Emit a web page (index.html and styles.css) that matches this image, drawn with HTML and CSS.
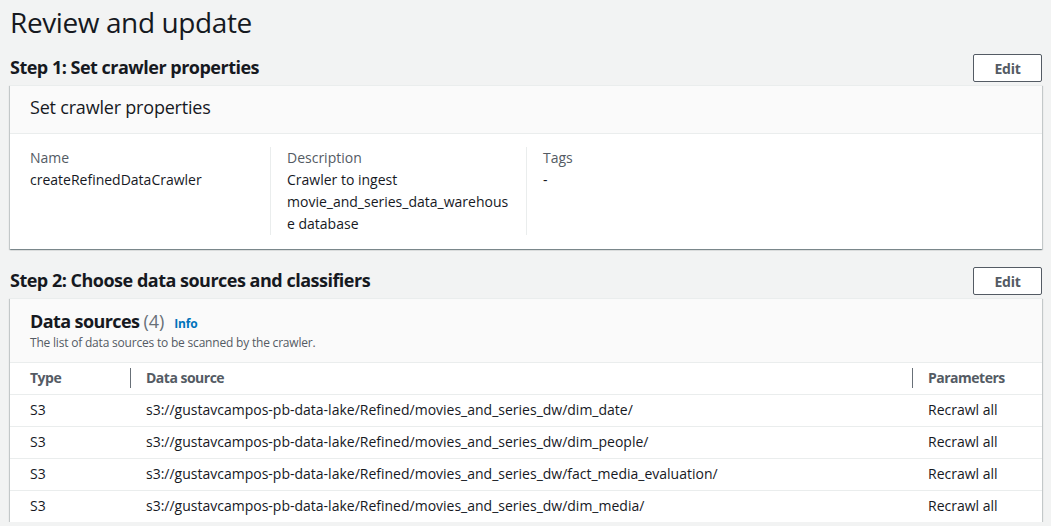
FILE: index.html
```html
<!DOCTYPE html>
<html lang="en">
<head>
<meta charset="utf-8">
<title>Review and update</title>
<link rel="stylesheet" href="styles.css">
</head>
<body>
<main class="page">
  <h1 class="page-title">Review and update</h1>

  <section class="step">
    <div class="step-head">
      <h2 class="step-title">Step 1: Set crawler properties</h2>
      <button class="btn">Edit</button>
    </div>
    <div class="card">
      <div class="card-header">
        <h3 class="card-title">Set crawler properties</h3>
      </div>
      <div class="card-body">
        <div class="kv-grid">
          <div class="kv">
            <div class="kv-label">Name</div>
            <div class="kv-value">createRefinedDataCrawler</div>
          </div>
          <div class="kv">
            <div class="kv-label">Description</div>
            <div class="kv-value kv-wrap">Crawler to ingest movie_and_series_data_warehouse database</div>
          </div>
          <div class="kv">
            <div class="kv-label">Tags</div>
            <div class="kv-value">-</div>
          </div>
        </div>
      </div>
    </div>
  </section>

  <section class="step">
    <div class="step-head">
      <h2 class="step-title">Step 2: Choose data sources and classifiers</h2>
      <button class="btn">Edit</button>
    </div>
    <div class="card">
      <div class="card-header table-header">
        <div class="table-title-row">
          <h3 class="table-title">Data sources <span class="count">(4)</span></h3>
          <a class="info">Info</a>
        </div>
        <p class="table-desc">The list of data sources to be scanned by the crawler.</p>
      </div>
      <table class="table">
        <thead>
          <tr>
            <th class="col-type"><span class="th-in">Type</span></th>
            <th class="col-src"><span class="th-in th-div">Data source</span></th>
            <th class="col-par"><span class="th-in th-div">Parameters</span></th>
          </tr>
        </thead>
        <tbody>
          <tr><td>S3</td><td>s3://gustavcampos-pb-data-lake/Refined/movies_and_series_dw/dim_date/</td><td>Recrawl all</td></tr>
          <tr><td>S3</td><td>s3://gustavcampos-pb-data-lake/Refined/movies_and_series_dw/dim_people/</td><td>Recrawl all</td></tr>
          <tr><td>S3</td><td>s3://gustavcampos-pb-data-lake/Refined/movies_and_series_dw/fact_media_evaluation/</td><td>Recrawl all</td></tr>
          <tr><td>S3</td><td>s3://gustavcampos-pb-data-lake/Refined/movies_and_series_dw/dim_media/</td><td>Recrawl all</td></tr>
        </tbody>
      </table>
    </div>
  </section>
</main>
</body>
</html>
```

FILE: styles.css
```css
* { box-sizing: border-box; }
html, body { margin: 0; padding: 0; }
body {
  background: #f2f3f3;
  font-family: "Open Sans", "Noto Sans", Arial, sans-serif;
  color: #16191f;
  font-size: 14px;
  line-height: 22px;
}
.page {
  width: 1032px;
  margin-left: 10px;
}
.page-title {
  margin: 0;
  padding-top: 4px;
  font-size: 28px;
  line-height: 36px;
  font-weight: 400;
  letter-spacing: -0.4px;
  color: #16191f;
}
.step-head {
  display: flex;
  align-items: flex-end;
  justify-content: space-between;
  height: 49px;
  padding-bottom: 3px;
}
.step:first-of-type .step-head { height: 45px; }
.step-title {
  margin: 0;
  font-size: 18px;
  line-height: 22px;
  font-weight: 700;
  letter-spacing: -0.5px;
  padding-bottom: 4px;
}
.btn {
  width: 69px;
  height: 28px;
  border: 1px solid #545b64;
  border-radius: 2px;
  background: #fff;
  color: #545b64;
  font-family: inherit;
  font-size: 14px;
  font-weight: 700;
  letter-spacing: -0.2px;
  padding: 0;
  cursor: pointer;
}
.card {
  background: #fff;
  box-shadow: 0 1px 1px 0 rgba(0, 28, 36, 0.3), 1px 1px 1px 0 rgba(0, 28, 36, 0.15), -1px 1px 1px 0 rgba(0, 28, 36, 0.15);
  border-top: 1px solid #eaeded;
}
.card-header {
  background: #fafafa;
  border-bottom: 1px solid #eaeded;
  padding: 8px 20px 13px;
}
.card-title {
  margin: 0;
  font-size: 18px;
  line-height: 26px;
  font-weight: 400;
  letter-spacing: -0.2px;
}
.card-body {
  padding: 13px 20px 14px;
}
.kv-grid {
  display: grid;
  grid-template-columns: 240px 256px 256px;
}
.kv + .kv {
  border-left: 1px solid #eaeded;
  padding-left: 16px;
}
.kv-label { color: #545b64; }
.kv-value { color: #16191f; }
.kv-wrap { width: 222px; overflow-wrap: anywhere; }

.table-header { padding: 10px 20px 11px; }
.table-title-row {
  display: flex;
  align-items: baseline;
  gap: 10px;
}
.table-title {
  margin: 0;
  font-size: 18px;
  line-height: 24px;
  font-weight: 700;
  letter-spacing: -0.6px;
}
.count { font-weight: 400; color: #687078; letter-spacing: 0; }
.info {
  font-size: 12px;
  font-weight: 700;
  color: #0073bb;
  letter-spacing: -0.2px;
}
.table-desc {
  margin: 0;
  font-size: 12px;
  line-height: 16px;
  letter-spacing: -0.2px;
  color: #545b64;
}
.table {
  width: 100%;
  border-collapse: collapse;
}
.table th {
  text-align: left;
  font-weight: 700;
  letter-spacing: -0.5px;
  color: #545b64;
  height: 31px;
  padding: 0;
  border-bottom: 1px solid #eaeded;
}
.table td {
  height: 32px;
  padding: 0;
  border-top: 1px solid #eaeded;
}
.table tbody tr:first-child td { border-top: none; }
.table th:first-child, .table td:first-child { padding-left: 20px; }
.col-type { width: 120px; }
.col-par { width: 130px; }
.th-in { display: block; }
.th-div {
  border-left: 1px solid #687078;
  padding-left: 15px;
  line-height: 20px;
}
.table td:nth-child(2), .table td:nth-child(3) { padding-left: 16px; }
```
